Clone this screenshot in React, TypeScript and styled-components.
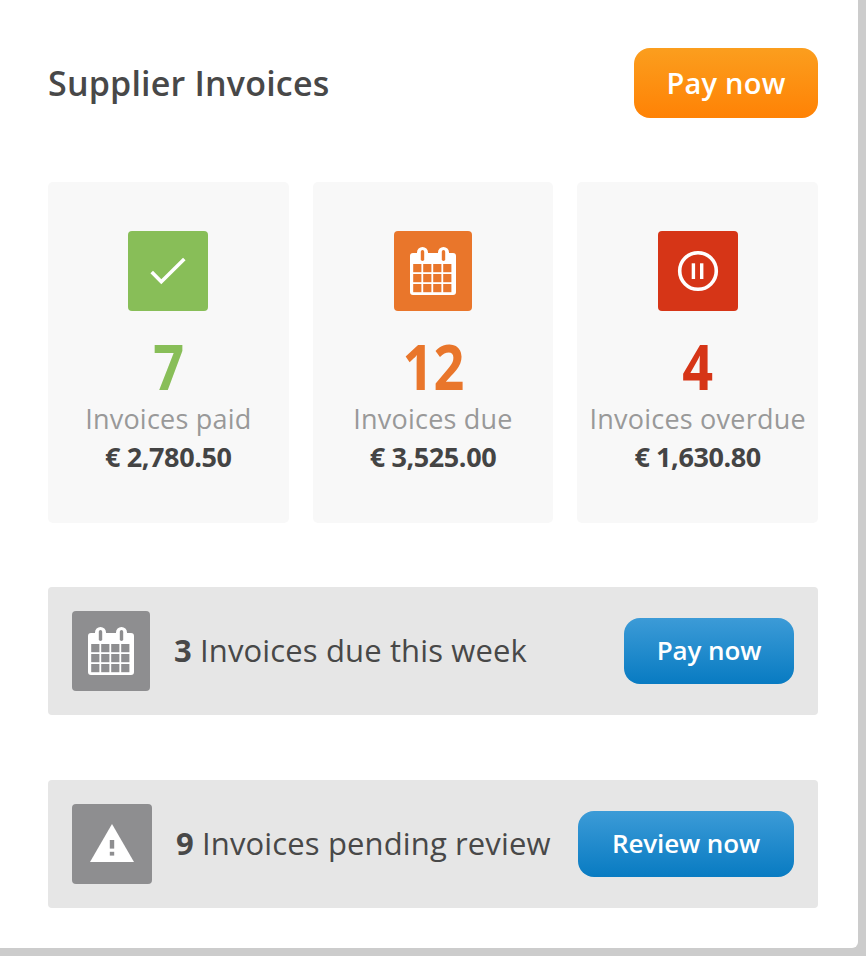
import styled, { createGlobalStyle } from "styled-components"

const GlobalStyle = createGlobalStyle`
  html, body {
    margin: 0;
    padding: 0;
    background: #cccccc;
  }
  body {
    font-family: "Open Sans", "Noto Sans", sans-serif;
  }
`

const Card = styled.div`
  box-sizing: border-box;
  width: 858px;
  height: 948px;
  padding: 48px 40px 40px 48px;
  background: #ffffff;
  border-bottom-right-radius: 6px;
`

const Header = styled.div`
  display: flex;
  align-items: center;
  justify-content: space-between;
  height: 70px;
  margin-bottom: 64px;
`

const Title = styled.h1`
  margin: 0;
  font-size: 34px;
  font-weight: 600;
  letter-spacing: 0.2px;
  color: #484848;
`

const Button = styled.button<{ $tone: "orange" | "blue"; $width: number; $height: number }>`
  width: ${(p) => p.$width}px;
  height: ${(p) => p.$height}px;
  padding: 0 0 2px;
  border: none;
  border-radius: 16px;
  font-family: inherit;
  font-weight: 600;
  font-size: ${(p) => (p.$tone === "orange" ? 29 : 26)}px;
  letter-spacing: ${(p) => (p.$tone === "orange" ? 0.25 : -0.1)}px;
  color: #ffffff;
  background: ${(p) =>
    p.$tone === "orange"
      ? "linear-gradient(#fb9e1e, #ff8205)"
      : "linear-gradient(#3c9bd7, #087bc2)"};
`

const Tiles = styled.div`
  display: grid;
  grid-template-columns: repeat(3, 1fr);
  column-gap: 24px;
  margin-bottom: 64.33px;
`

const Tile = styled.div`
  box-sizing: border-box;
  height: 340.67px;
  padding-top: 49px;
  display: flex;
  flex-direction: column;
  align-items: center;
  background: #f8f8f8;
  border-radius: 5px;
`

const IconBox = styled.div<{ $color: string; $width?: number }>`
  flex: none;
  width: ${(p) => p.$width ?? 80}px;
  height: 80px;
  display: flex;
  align-items: center;
  justify-content: center;
  border-radius: 4px;
  background: ${(p) => p.$color};
  color: ${(p) => p.$color};
`

const Count = styled.div<{ $color: string }>`
  margin-top: 22px;
  height: 66px;
  line-height: 66px;
  font-size: 62px;
  font-weight: 700;
  transform: scaleX(0.87);
  color: ${(p) => p.$color};
`

const Label = styled.div`
  height: 40px;
  line-height: 40px;
  font-size: 27px;
  letter-spacing: 0.22px;
  white-space: nowrap;
  color: #999999;
`

const Amount = styled.div`
  height: 36px;
  line-height: 36px;
  font-size: 27px;
  font-weight: 700;
  letter-spacing: -0.4px;
  color: #444444;
`

const Row = styled.div`
  box-sizing: border-box;
  height: 128px;
  padding: 0 24px;
  margin-bottom: 65px;
  display: flex;
  align-items: center;
  background: #e6e6e6;
  border-radius: 4px;

  &:last-child {
    margin-bottom: 0;
  }
`

const RowText = styled.div`
  flex: 1;
  margin-left: 24px;
  padding-bottom: 2px;
  font-size: 31px;
  letter-spacing: 0.13px;
  white-space: nowrap;
  color: #484848;

  b {
    font-weight: 700;
  }
`

const CheckIcon = () => (
  <svg width="38" height="30" viewBox="0 0 38 30">
    <path d="M2.7 16 L12.3 25.8 L35.3 3" fill="none" stroke="#fff" strokeWidth="3.6" />
  </svg>
)

const CalendarIcon = () => {
  const cols = [0, 1, 2, 3]
  const rows = [0, 1, 2]
  return (
    <svg width="46" height="48" viewBox="0 0 46 48">
      <path
        d="M3 6h4V5.5a5.5 5.5 0 0 1 11 0V6h10V5.5a5.5 5.5 0 0 1 11 0V6h4a3 3 0 0 1 3 3v36a3 3 0 0 1-3 3H3a3 3 0 0 1-3-3V9a3 3 0 0 1 3-3z"
        fill="#fff"
      />
      <rect x="10.8" y="3" width="3.4" height="11" rx="1.7" fill="currentColor" />
      <rect x="31.8" y="3" width="3.4" height="11" rx="1.7" fill="currentColor" />
      {rows.map((r) =>
        cols.map((c) => (
          <rect
            key={`${r}-${c}`}
            x={3.2 + c * 10}
            y={17 + r * 10}
            width="8.2"
            height="8.2"
            fill="currentColor"
          />
        ))
      )}
    </svg>
  )
}

const PauseIcon = () => (
  <svg width="42" height="42" viewBox="0 0 42 42">
    <circle cx="21" cy="21" r="18.3" fill="none" stroke="#fff" strokeWidth="3.6" />
    <rect x="14.7" y="13.3" width="3.4" height="15.7" fill="#fff" />
    <rect x="23" y="13.3" width="3.4" height="15.7" fill="#fff" />
  </svg>
)

const WarningIcon = () => (
  <svg width="44" height="40" viewBox="0 0 44 40">
    <path d="M22 0 L44 38 H0 Z" fill="#fff" />
    <rect x="19.8" y="16" width="4.4" height="8.6" fill="currentColor" />
    <rect x="19.8" y="27.8" width="4.4" height="3.8" fill="currentColor" />
  </svg>
)

export default function App() {
  return (
    <>
      <GlobalStyle />
      <Card>
        <Header>
          <Title>Supplier Invoices</Title>
          <Button $tone="orange" $width={184} $height={70}>
            Pay now
          </Button>
        </Header>

        <Tiles>
          <Tile>
            <IconBox $color="#88be58">
              <CheckIcon />
            </IconBox>
            <Count $color="#88be58">7</Count>
            <Label>Invoices paid</Label>
            <Amount>€ 2,780.50</Amount>
          </Tile>
          <Tile>
            <IconBox $color="#e9762b" $width={78}>
              <CalendarIcon />
            </IconBox>
            <Count $color="#e9762b">12</Count>
            <Label>Invoices due</Label>
            <Amount>€ 3,525.00</Amount>
          </Tile>
          <Tile>
            <IconBox $color="#d63517">
              <PauseIcon />
            </IconBox>
            <Count $color="#d63517">4</Count>
            <Label>Invoices overdue</Label>
            <Amount>€ 1,630.80</Amount>
          </Tile>
        </Tiles>

        <Row>
          <IconBox $color="#8e8e90" $width={78}>
            <CalendarIcon />
          </IconBox>
          <RowText>
            <b>3</b> Invoices due this week
          </RowText>
          <Button $tone="blue" $width={170} $height={66}>
            Pay now
          </Button>
        </Row>

        <Row>
          <IconBox $color="#8e8e90">
            <WarningIcon />
          </IconBox>
          <RowText>
            <b>9</b> Invoices pending review
          </RowText>
          <Button $tone="blue" $width={216} $height={66}>
            Review now
          </Button>
        </Row>
      </Card>
    </>
  )
}
